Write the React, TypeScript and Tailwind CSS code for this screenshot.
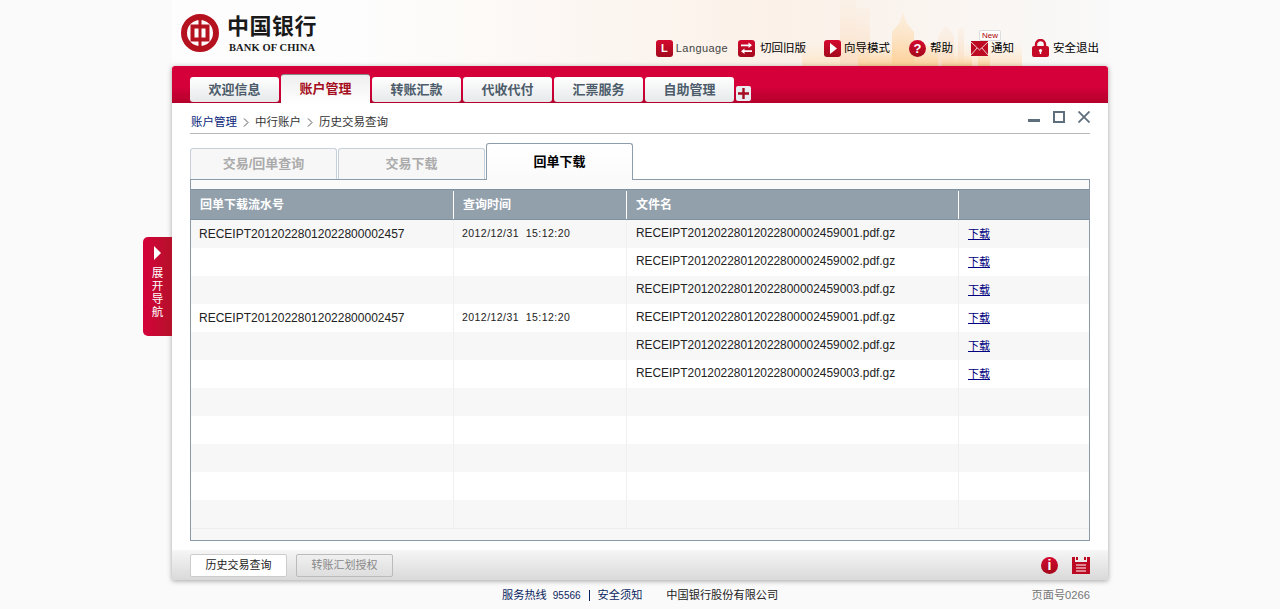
const cjk = { fontFamily: '"Liberation Sans", "Noto Sans CJK SC", sans-serif' };

const mainTabs = ["欢迎信息", "账户管理", "转账汇款", "代收代付", "汇票服务", "自助管理"];

const rows = [
  { id: "RECEIPT20120228012022800002457", time: "2012/12/31  15:12:20", file: "RECEIPT20120228012022800002459001.pdf.gz" },
  { id: "", time: "", file: "RECEIPT20120228012022800002459002.pdf.gz" },
  { id: "", time: "", file: "RECEIPT20120228012022800002459003.pdf.gz" },
  { id: "RECEIPT20120228012022800002457", time: "2012/12/31  15:12:20", file: "RECEIPT20120228012022800002459001.pdf.gz" },
  { id: "", time: "", file: "RECEIPT20120228012022800002459002.pdf.gz" },
  { id: "", time: "", file: "RECEIPT20120228012022800002459003.pdf.gz" },
  { id: "", time: "", file: "" },
  { id: "", time: "", file: "" },
  { id: "", time: "", file: "" },
  { id: "", time: "", file: "" },
  { id: "", time: "", file: "" },
];

function RedBox({ children }: { children: React.ReactNode }) {
  return (
    <span className="flex h-[17px] w-[17px] items-center justify-center rounded-[3px] bg-gradient-to-b from-[#d4082f] to-[#a30a1c]">
      {children}
    </span>
  );
}

function Skyline() {
  return (
    <svg className="absolute left-[620px] top-0" width="316" height="66" viewBox="0 0 316 66">
      <defs>
        <linearGradient id="far" x1="0" y1="0" x2="0" y2="1">
          <stop offset="0" stopColor="#fbeee2" stopOpacity="0.5" />
          <stop offset="1" stopColor="#fbdcc0" stopOpacity="0.9" />
        </linearGradient>
        <linearGradient id="near" x1="0" y1="0" x2="0" y2="1">
          <stop offset="0" stopColor="#fde6c8" stopOpacity="0.4" />
          <stop offset="1" stopColor="#fcd199" />
        </linearGradient>
        <linearGradient id="glow" x1="0" y1="0" x2="0" y2="1">
          <stop offset="0" stopColor="#fdeeda" stopOpacity="0" />
          <stop offset="1" stopColor="#fde3c4" />
        </linearGradient>
      </defs>
      <rect x="10" y="40" width="220" height="26" fill="url(#glow)" />
      <g fill="url(#far)">
        <rect x="48" y="0" width="16" height="66" />
        <rect x="64" y="8" width="14" height="58" />
        <polygon points="146,66 146,36 154,25 162,36 162,66" />
        <rect x="166" y="28" width="6" height="38" />
      </g>
      <g fill="url(#near)">
        <rect x="66" y="50" width="38" height="16" />
        <polygon points="100,66 100,32 108,22 111,12 114,22 122,32 122,66" />
        <rect x="122" y="46" width="24" height="20" />
        <rect x="150" y="56" width="30" height="10" />
        <rect x="186" y="54" width="12" height="12" />
      </g>
    </svg>
  );
}

function Logo() {
  return (
    <div className="flex items-start">
      <svg width="38" height="38" viewBox="0 0 38 38">
        <circle cx="19" cy="19" r="16" fill="none" stroke="#b5121f" strokeWidth="6" />
        <rect x="11.5" y="12.5" width="15" height="13" fill="none" stroke="#b5121f" strokeWidth="4" />
        <rect x="17.5" y="3" width="3" height="32" fill="#b5121f" />
      </svg>
      <div className="ml-[8px] flex flex-col">
        <span className="mt-[-3px] text-[22px] leading-[26px] font-bold tracking-[0.5px] text-[#1a1a1a]" style={{ fontFamily: '"Noto Sans CJK SC", sans-serif' }}>
          中国银行
        </span>
        <span className="mt-[5px] ml-[2px] text-[10.5px] leading-[12px] font-bold tracking-[0.1px] text-[#1a1a1a]" style={{ fontFamily: '"Liberation Serif", serif' }}>
          BANK OF CHINA
        </span>
      </div>
    </div>
  );
}

function Toolbar() {
  return (
    <div className="flex items-center text-[11.5px] leading-[17px] text-black">
      <RedBox>
        <span className="text-[11px] font-bold text-white">L</span>
      </RedBox>
      <span className="ml-[3px] mr-[10px] text-[11px] font-normal tracking-[0.4px] text-[#444]">Language</span>
      <RedBox>
        <svg width="13" height="13" viewBox="0 0 13 13" fill="#fff">
          <path d="M1 2.5h7.5V.5L12 3.3 8.5 6V4.2H1zM12 8.3H4.5V6.5L1 9.2l3.5 2.7V10H12z" />
        </svg>
      </RedBox>
      <span className="ml-[5px] mr-[18px]">切回旧版</span>
      <RedBox>
        <svg width="8" height="11" viewBox="0 0 8 11" fill="#fff">
          <path d="M1 0l7 5.5L1 11z" />
        </svg>
      </RedBox>
      <span className="ml-[3px] mr-[19px]">向导模式</span>
      <span className="flex h-[17px] w-[17px] items-center justify-center rounded-full bg-gradient-to-b from-[#d4082f] to-[#a30a1c] text-[13px] font-bold text-white">?</span>
      <span className="ml-[4px] mr-[18px]">帮助</span>
      <span className="relative">
        <svg className="block" width="17" height="15" viewBox="0 0 17 15">
          <rect width="17" height="15" fill="#bb0a22" />
          <path d="M0 1l8.5 8L17 1M0 14l6-7M17 14l-6-7" fill="none" stroke="#fff" strokeWidth="0.8" />
        </svg>
        <span className="absolute left-[8px] top-[-11px] rounded-[2px] border border-[#ddd] bg-white px-[2px] text-[8px] leading-[9px] text-[#a00]">New</span>
      </span>
      <span className="ml-[3px] mr-[18px]">通知</span>
      <svg width="17" height="18" viewBox="0 0 17 18">
        <path d="M4 8V5.5a4.5 4.5 0 0 1 9 0V8" fill="none" stroke="#c40a26" strokeWidth="2.4" />
        <rect y="7" width="17" height="11" rx="2" fill="#c40a26" />
        <circle cx="8.5" cy="11.5" r="1.6" fill="#fff" />
        <rect x="7.8" y="11.5" width="1.4" height="3.5" fill="#fff" />
      </svg>
      <span className="ml-[4px]">安全退出</span>
    </div>
  );
}

function WindowButtons() {
  return (
    <div className="flex items-center gap-[13px]">
      <svg width="12" height="12" viewBox="0 0 12 12">
        <rect y="8" width="12" height="3" fill="#5f6e7c" />
      </svg>
      <svg width="12" height="12" viewBox="0 0 12 12">
        <rect x="1" y="1" width="10" height="10" fill="none" stroke="#5f6e7c" strokeWidth="2" />
      </svg>
      <svg width="12" height="12" viewBox="0 0 12 12">
        <path d="M0.5 0.5l11 11M11.5 0.5l-11 11" stroke="#5f6e7c" strokeWidth="1.8" />
      </svg>
    </div>
  );
}

export default function App() {
  return (
    <div className="relative min-h-[609px] overflow-hidden bg-[#fafafa]" style={cjk}>
      <div className="mx-auto w-[936px]">
        <header className="relative h-[66px] bg-gradient-to-r from-[#fdfdfd] from-20% via-[#fbf1e8] via-65% to-[#f9f9f9]">
          <Skyline />
          <div className="absolute left-[9px] top-[14px]">
            <Logo />
          </div>
          <div className="absolute right-[9px] bottom-[9px]">
            <Toolbar />
          </div>
        </header>

        <div className="relative bg-white shadow-[0_1px_5px_rgba(0,0,0,0.35)]">
          {/* side tab hangs off the panel */}
          <div className="absolute left-[-29px] top-[171px] flex h-[99px] w-[29px] flex-col items-center rounded-l-[5px] bg-gradient-to-r from-[#d5003a] to-[#b5102a] pt-[9px] text-white">
            <svg width="7" height="14" viewBox="0 0 7 14" fill="#fff">
              <path d="M0 0l7 7-7 7z" />
            </svg>
            <div className="mt-[7px] flex w-[12px] flex-col text-center text-[11.5px] leading-[13px]">
              <span>展</span>
              <span>开</span>
              <span>导</span>
              <span>航</span>
            </div>
          </div>

          {/* main nav */}
          <nav className="flex h-[37px] items-end gap-[2px] rounded-t-[3px] bg-gradient-to-b from-[#d5003a] from-55% to-[#b4002b] pl-[18px]">
            {mainTabs.map((t, i) =>
              i === 1 ? (
                <div key={t} className="flex h-[29px] w-[89px] items-center justify-center rounded-t-[3px] border-t border-[#888] bg-gradient-to-b from-[#eeeeee] to-white text-[13px] font-bold text-[#a50d20]">
                  {t}
                </div>
              ) : (
                <div key={t} className="mb-px flex h-[25px] w-[89px] items-center justify-center rounded-[3px] bg-gradient-to-b from-white to-[#e6e8ea] text-[13px] font-bold text-[#4c5c6a]">
                  {t}
                </div>
              )
            )}
            <div className="mb-[2px] flex h-[15px] w-[15px] items-center justify-center rounded-[2px] bg-[#e8eef0]">
              <svg width="11" height="11" viewBox="0 0 11 11">
                <path d="M0 5.5h11M5.5 0v11" stroke="#a50d20" strokeWidth="2.4" />
              </svg>
            </div>
          </nav>

          <div className="px-[18px]">
            {/* breadcrumb */}
            <div className="flex h-[31px] items-center justify-between border-b border-[#b8b8b8] pb-px">
              <div className="mt-[10px] flex items-center pl-px text-[11.5px] text-[#333]">
                <span className="text-[#0a1f78]">账户管理</span>
                <svg className="mx-[6px]" width="6" height="9" viewBox="0 0 6 9">
                  <path d="M1 0.5l4 4-4 4" fill="none" stroke="#555" />
                </svg>
                <span>中行账户</span>
                <svg className="mx-[6px]" width="6" height="9" viewBox="0 0 6 9">
                  <path d="M1 0.5l4 4-4 4" fill="none" stroke="#555" />
                </svg>
                <span>历史交易查询</span>
              </div>
              <div className="mt-[-2px]">
                <WindowButtons />
              </div>
            </div>

            {/* inner tabs */}
            <div className="mt-[9px] flex items-end">
              <div className="flex h-[31px] w-[147px] items-center justify-center rounded-t-[3px] border border-b-0 border-[#c5d0da] bg-[#f7f7f7] text-[13px] font-bold text-[#ababab]">
                交易/回单查询
              </div>
              <div className="ml-px flex h-[31px] w-[147px] items-center justify-center rounded-t-[3px] border border-b-0 border-[#c5d0da] bg-[#f7f7f7] text-[13px] font-bold text-[#ababab]">
                交易下载
              </div>
              <div className="relative z-10 mb-[-1px] ml-px flex h-[37px] w-[147px] items-center justify-center rounded-t-[3px] border border-b-0 border-[#8e9dab] bg-gradient-to-b from-white to-[#fafafa] text-[13px] font-bold text-black">
                回单下载
              </div>
            </div>

            {/* table box */}
            <div className="h-[362px] border border-[#8a9aa8] bg-[#f7f7f7]">
              <div className="h-[9px] bg-[#fafafa]" />
              <div className="flex h-[31px] border-y border-[#7f909e] bg-[#92a0ac] pt-px text-[12px] font-bold text-white">
                <div className="flex w-[263px] items-center border-r border-white pl-[9px]">回单下载流水号</div>
                <div className="flex w-[173px] items-center border-r border-white pl-[9px]">查询时间</div>
                <div className="flex w-[332px] items-center border-r border-white pl-[9px]">文件名</div>
                <div className="flex-1" />
              </div>
              <div className="border-b border-[#eee]">
                {rows.map((r, i) => (
                  <div key={i} className={`flex h-[28px] text-[#222] ${i % 2 === 0 ? "bg-[#f7f7f7]" : "bg-white"}`}>
                    <div className="flex w-[263px] items-center border-r border-[#efefef] pl-[8px] text-[12px]">{r.id}</div>
                    <div className="flex w-[173px] items-center border-r border-[#efefef] pl-[8px] text-[10.5px] tracking-[0.45px] whitespace-pre">{r.time}</div>
                    <div className="flex w-[332px] items-center border-r border-[#efefef] pl-[9px] text-[11.9px]">{r.file}</div>
                    <div className="flex flex-1 items-center pl-[9px]">
                      {r.file && <a className="text-[11px] text-[#000080] underline">下载</a>}
                    </div>
                  </div>
                ))}
              </div>
            </div>
          </div>

          {/* bottom bar */}
          <div className="mt-[9px] flex h-[30px] items-center justify-between bg-gradient-to-b from-[#f6f6f6] to-[#d9d9d9] px-[18px]">
            <div className="flex gap-[9px]">
              <div className="flex h-[23px] w-[97px] items-center justify-center rounded-[2px] border border-[#ccc] bg-white text-[11px] text-[#222]">历史交易查询</div>
              <div className="flex h-[23px] w-[97px] items-center justify-center rounded-[2px] border border-[#bbb] bg-gradient-to-b from-[#f0f0f0] to-[#dedede] text-[11px] text-[#888]">转账汇划授权</div>
            </div>
            <div className="flex items-center gap-[14px]">
              <span className="flex h-[17px] w-[17px] items-center justify-center rounded-full bg-gradient-to-b from-[#d4082f] to-[#a30a1c] text-[14px] font-bold text-white">i</span>
              <svg width="18" height="18" viewBox="0 0 18 18">
                <path d="M0 1h3v5h12V1h3v17H0z" fill="#bb0a22" />
                <path d="M4 1h2v3H4zM12 1h2v3h-2z" fill="#bb0a22" />
                <path d="M4 9h10M4 12h10M4 15h10" stroke="#fff" strokeWidth="1.2" />
              </svg>
            </div>
          </div>
        </div>

        {/* footer */}
        <footer className="relative flex h-[29px] items-center pl-[330px] pt-px text-[11.2px]">
          <span className="text-[#0a1f60]">服务热线</span>
          <span className="ml-[6px] text-[10px] text-[#0a1f60]">95566</span>
          <span className="mx-[8px] h-[11px] border-l border-[#0a1f60]" />
          <span className="text-[#0a1f60]">安全须知</span>
          <span className="ml-[24px] text-[#222]">中国银行股份有限公司</span>
          <span className="absolute right-[18px] text-[#777]">页面号0266</span>
        </footer>
      </div>
    </div>
  );
}
